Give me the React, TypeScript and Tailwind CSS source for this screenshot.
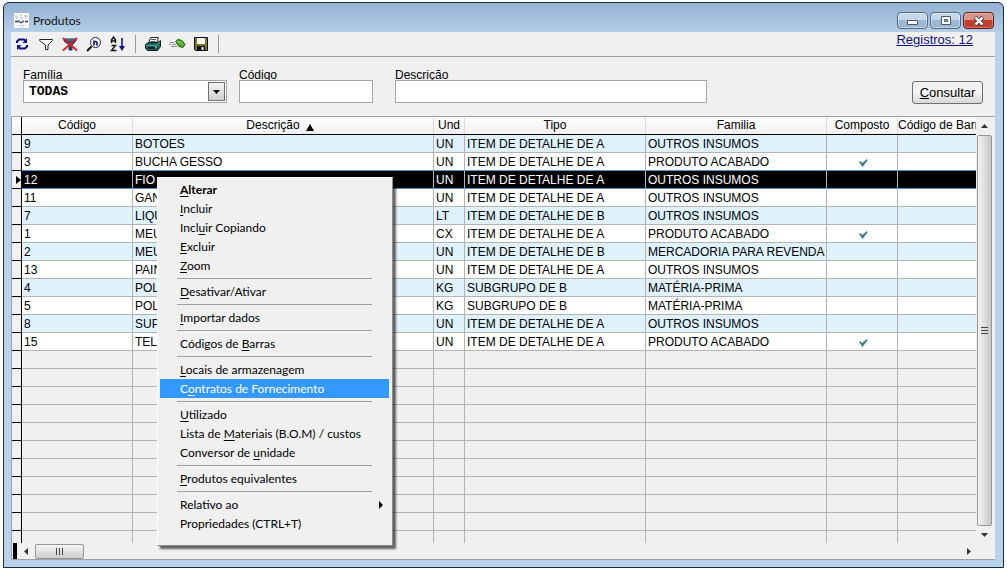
import React from 'react';

interface Product {
  code: string;
  name: string;
  unit: string;
  type: string;
  family: string;
  composite?: boolean;
}

const products: Product[] = [
  { code: '9', name: 'BOTOES', unit: 'UN', type: 'ITEM DE DETALHE DE A', family: 'OUTROS INSUMOS' },
  { code: '3', name: 'BUCHA GESSO', unit: 'UN', type: 'ITEM DE DETALHE DE A', family: 'PRODUTO ACABADO', composite: true },
  { code: '12', name: 'FIO', unit: 'UN', type: 'ITEM DE DETALHE DE A', family: 'OUTROS INSUMOS' },
  { code: '11', name: 'GAN', unit: 'UN', type: 'ITEM DE DETALHE DE A', family: 'OUTROS INSUMOS' },
  { code: '7', name: 'LIQU', unit: 'LT', type: 'ITEM DE DETALHE DE B', family: 'OUTROS INSUMOS' },
  { code: '1', name: 'MEU', unit: 'CX', type: 'ITEM DE DETALHE DE A', family: 'PRODUTO ACABADO', composite: true },
  { code: '2', name: 'MEU', unit: 'UN', type: 'ITEM DE DETALHE DE B', family: 'MERCADORIA PARA REVENDA' },
  { code: '13', name: 'PAIN', unit: 'UN', type: 'ITEM DE DETALHE DE A', family: 'OUTROS INSUMOS' },
  { code: '4', name: 'POL', unit: 'KG', type: 'SUBGRUPO DE B', family: 'MATÉRIA-PRIMA' },
  { code: '5', name: 'POL', unit: 'KG', type: 'SUBGRUPO DE B', family: 'MATÉRIA-PRIMA' },
  { code: '8', name: 'SUP', unit: 'UN', type: 'ITEM DE DETALHE DE A', family: 'OUTROS INSUMOS' },
  { code: '15', name: 'TEL', unit: 'UN', type: 'ITEM DE DETALHE DE A', family: 'PRODUTO ACABADO', composite: true },
];

const SELECTED = '12';
const EMPTY_ROWS = 10;

interface MenuEntry {
  // [before, mnemonic, after]
  text?: [string, string, string];
  bold?: boolean;
  active?: boolean;
  submenu?: boolean;
}

const menu: MenuEntry[] = [
  { text: ['', 'A', 'lterar'], bold: true },
  { text: ['', 'I', 'ncluir'] },
  { text: ['Incl', 'u', 'ir Copiando'] },
  { text: ['', 'E', 'xcluir'] },
  { text: ['', 'Z', 'oom'] },
  {},
  { text: ['', 'D', 'esativar/Ativar'] },
  {},
  { text: ['', 'I', 'mportar dados'] },
  {},
  { text: ['Códigos de ', 'B', 'arras'] },
  {},
  { text: ['', 'L', 'ocais de armazenagem'] },
  { text: ['C', 'o', 'ntratos de Fornecimento'], active: true },
  {},
  { text: ['', 'U', 'tilizado'] },
  { text: ['Lista de ', 'M', 'ateriais (B.O.M) / custos'] },
  { text: ['Conversor de ', 'u', 'nidade'] },
  {},
  { text: ['', 'P', 'rodutos equivalentes'] },
  {},
  { text: ['Relativo ao', '', ''], submenu: true },
  { text: ['Propriedades (CTRL+T)', '', ''] },
];

const ToolButton: React.FC<{ label: string; children: React.ReactNode }> = ({ label, children }) => (
  <button aria-label={label} className="flex h-6 w-[22px] items-center justify-center">
    <svg width="18" height="18" viewBox="0 0 18 18" fill="none">
      {children}
    </svg>
  </button>
);

const ToolSeparator = () => <div className="mx-1 h-[18px] w-px bg-[#999]" />;

const Toolbar = () => (
  <div className="flex h-[25px] items-start border-b border-[#a0a0a0] pr-[22px]">
    <div className="flex flex-1 items-center gap-0.5">
      <ToolButton label="Atualizar">
        <path d="M4 8V6.5L6 4.5h5l2 2" stroke="#10108c" strokeWidth="2" />
        <path d="M14 3v5H9.500z" fill="#10108c" />
        <path d="M14 10v1.500l-2 2H7l-2-2" stroke="#10108c" strokeWidth="2" />
        <path d="M4 15v-5h4.500z" fill="#10108c" />
      </ToolButton>
      <ToolButton label="Filtrar">
        <path d="M2.500 4.500h13v1L11 10v4.500H8.500V10L2.500 5.500z" fill="#fff" stroke="#222" />
      </ToolButton>
      <ToolButton label="Remover filtro">
        <path d="M3 4h12v2l-4 4v5H8v-5L3 6z" fill="#1b4f7c" stroke="#203060" />
        <path d="M5 5h8" stroke="#3aa0c0" />
        <path d="M2 3l14 12.500M16 3L2 15.500" stroke="#d8202c" strokeWidth="1.800" />
      </ToolButton>
      <ToolButton label="Localizar">
        <circle cx="10.500" cy="7.500" r="5" fill="#fff" stroke="#223" />
        <path d="M6.500 11.500L2 16" stroke="#111" strokeWidth="2" />
        <path d="M9 10.500V5.500M9 6.500h2l1 1v3" stroke="#10108c" strokeWidth="1.700" />
      </ToolButton>
      <ToolButton label="Ordenar">
        <path d="M2.500 8V5l2-3 2 3v3M2.500 6h4M2.500 10.500h4L2.500 15.500h5" stroke="#111" strokeWidth="1.400" />
        <path d="M13 3v11" stroke="#10108c" strokeWidth="1.600" />
        <path d="M10 11h6l-3 5z" fill="#10108c" />
      </ToolButton>
      <ToolSeparator />
      <ToolButton label="Imprimir">
        <path d="M6.500 2.500h8L12.500 8h-8z" fill="#fff" stroke="#222" />
        <path d="M7 4.500h5M6.500 6.500h5" stroke="#555" />
        <path d="M1.500 9.500l3-2h9l3-2v6l-3 4h-10l-2-2z" fill="#186060" stroke="#0b2020" />
        <path d="M2 10.500h11l3-3.500" stroke="#57a5a0" />
        <path d="M4 13h7" stroke="#061616" strokeWidth="1.500" />
        <path d="M11 12h2" stroke="#d8cf50" />
      </ToolButton>
      <ToolButton label="Enviar">
        <path d="M7.500 6.500L10 4.500l4 1 3 4-2 3-4-1z" fill="#4da82a" stroke="#1f5c10" />
        <path d="M9.500 6.500l4 1 1.500 2" stroke="#a8e070" />
        <path d="M2 7.500h4M1 9.500h2M4 9.500h4M3 11.500h6" stroke="#888" />
      </ToolButton>
      <ToolButton label="Salvar">
        <path d="M2.500 2.500h13v13h-12l-1-1z" fill="#77772a" stroke="#111" />
        <path d="M5 3h8v6H5z" fill="#f4f4f4" />
        <path d="M5 11h8v4H5z" fill="#111" />
        <path d="M10.500 12v3" stroke="#eee" strokeWidth="2" />
      </ToolButton>
      <ToolSeparator />
    </div>
    <a href="#registros" className="text-[13px] leading-4 text-[#10107c] underline">
      Registros: 12
    </a>
  </div>
);

const TitleBar = () => (
  <div className="flex h-[29px] items-start gap-1 pl-[3px] pr-px">
    <svg width="15" height="15" viewBox="0 0 15 15" className="mt-2.5">
      <path d="M0 0h15v15H0z" fill="#fff" />
      <path d="M1 3h3M6 2h2M10 3h4M2 5h2M6 5h3M11 5h2" stroke="#a9adb8" />
      <path d="M1 8.500h3M5 7.500v2M6 9.500h2M9 7.500v2M11 8.500h3" stroke="#26345e" strokeWidth="1.500" />
      <path d="M4 12.500h7M7 14.500h2" stroke="#c5c8d0" />
    </svg>
    <h1 className="mt-2.5 flex-1 font-[Lato,sans-serif] text-[12px] leading-4 text-[#111]">Produtos</h1>
    <div className="mt-[9px] flex gap-0.5">
      <button aria-label="Minimizar" className="flex h-[17px] w-[31px] items-center justify-center rounded-sm border border-[#50688a] bg-linear-to-b from-[#c5d7ea] from-50% to-[#9cb7d3] to-50% ring-1 ring-white/40 ring-inset">
        <svg width="12" height="6" viewBox="0 0 12 6" className="mt-1">
          <path d="M.5.5h10v4H.5z" fill="#fff" stroke="#4c5a6c" />
        </svg>
      </button>
      <button aria-label="Maximizar" className="flex h-[17px] w-[31px] items-center justify-center rounded-sm border border-[#50688a] bg-linear-to-b from-[#c5d7ea] from-50% to-[#9cb7d3] to-50% ring-1 ring-white/40 ring-inset">
        <svg width="12" height="10" viewBox="0 0 12 10">
          <path d="M1.500.5h9v8h-9z" fill="#fff" stroke="#4c5a6c" />
          <path d="M4.500 3.500h3v2h-3z" fill="#9cb7d3" stroke="#4c5a6c" />
        </svg>
      </button>
      <button aria-label="Fechar" className="flex h-[17px] w-[31px] items-center justify-center rounded-sm border border-[#5c1a18] bg-linear-to-b from-[#dc9284] from-50% to-[#c0402c] to-50% ring-1 ring-white/30 ring-inset">
        <svg width="12" height="10" viewBox="0 0 12 10">
          <path d="M2 1l8 8M10 1L2 9" stroke="#5a4a50" strokeWidth="4" />
          <path d="M2.500 1.500l7 7M9.500 1.500l-7 7" stroke="#fff" strokeWidth="2.400" />
        </svg>
      </button>
    </div>
  </div>
);

const Filters = () => (
  <form className="flex h-[59px] items-start pl-3 pr-3 pt-2.5">
    <div className="w-[204px]">
      <label htmlFor="familia" className="block h-[13px] text-[12px] leading-4">Família</label>
      <div className="relative">
        <select
          id="familia"
          className="block h-[23px] w-full appearance-none border border-[#a5a5a5] bg-white pl-[5px] font-['Liberation_Mono',monospace] text-[13px] font-bold leading-5 text-black"
        >
          <option>TODAS</option>
        </select>
        <span className="pointer-events-none absolute right-0.5 top-0.5 flex h-[19px] w-[17px] items-center justify-center border border-[#707070] bg-linear-to-b from-[#f4f4f4] to-[#d0d0d0]">
          <svg width="7" height="4" viewBox="0 0 7 4">
            <path d="M0 0h7L3.500 4z" fill="#000" />
          </svg>
        </span>
      </div>
    </div>
    <div className="ml-3 w-[134px]">
      <label htmlFor="codigo" className="block h-[13px] text-[12px] leading-4">Código</label>
      <input id="codigo" className="relative block h-[23px] w-full border border-[#a5a5a5] bg-white px-1" />
    </div>
    <div className="ml-[22px] w-[312px]">
      <label htmlFor="descricao" className="block h-[13px] text-[12px] leading-4">Descrição</label>
      <input id="descricao" className="relative block h-[23px] w-full border border-[#a5a5a5] bg-white px-1" />
    </div>
    <button
      type="button"
      className="ml-auto mt-3.5 h-[23px] w-[71px] rounded-[3px] border border-[#707070] bg-linear-to-b from-[#f3f3f3] from-50% to-[#d8d8d8] text-[13px] leading-5"
    >
      <span className="underline">C</span>onsultar
    </button>
  </form>
);

const Check = () => (
  <svg width="9" height="8" viewBox="0 0 9 8" className="mx-auto mt-0.5 block" aria-label="Sim">
    <path d="M0 3l1-1 2 2L8 0l.5 1.500L3.500 8z" fill="#3f7f80" />
  </svg>
);

const headCell = 'h-[18px] overflow-hidden border-b border-black p-0 text-center font-normal whitespace-nowrap';
const cell = 'h-[18px] overflow-hidden border-r border-b pt-px pr-0 pb-0 pl-0.5 leading-4 whitespace-nowrap';
const gutter = 'h-[18px] border-r border-b border-black bg-[#f0f0f0] p-0';

const ProductGrid = () => (
  <table className="w-full table-fixed border-separate border-spacing-0 text-[12px] leading-[17px] text-black">
    <colgroup>
      <col className="w-2.5" />
      <col className="w-[111px]" />
      <col className="w-[301px]" />
      <col className="w-[31px]" />
      <col className="w-[181px]" />
      <col className="w-[181px]" />
      <col className="w-[71px]" />
      <col />
    </colgroup>
    <thead>
      <tr className="bg-linear-to-b from-white to-[#f0f0f0]">
        <th className={`${headCell} border-r`} />
        <th className={headCell}><span className="block border-r border-[#dcdcdc]">Código</span></th>
        <th className={headCell}>
          <span className="flex items-center justify-center gap-1.5 border-r border-[#dcdcdc] pr-1.5">
            Descrição
            <svg width="8" height="7" viewBox="0 0 8 7" className="mt-1">
              <path d="M4 0l4 7H0z" fill="#000" />
            </svg>
          </span>
        </th>
        <th className={headCell}><span className="block border-r border-[#dcdcdc]">Und</span></th>
        <th className={headCell}><span className="block border-r border-[#dcdcdc]">Tipo</span></th>
        <th className={headCell}><span className="block border-r border-[#dcdcdc]">Familia</span></th>
        <th className={headCell}><span className="block border-r border-[#dcdcdc]">Composto</span></th>
        <th className={`${headCell} text-left`}>Código de Barras</th>
      </tr>
    </thead>
    <tbody>
      {products.map((p, i) => {
        const selected = p.code === SELECTED;
        const beforeSelected = products[i + 1]?.code === SELECTED;
        const line = selected || beforeSelected ? 'border-r-[#b4b4b4] border-b-[#4a90d9]' : 'border-[#b4b4b4]';
        const tone = selected ? 'bg-black text-white' : i % 2 === 0 ? 'bg-[#dff2fe]' : 'bg-white';
        return (
          <tr key={p.code} className={tone}>
            <td className={gutter}>
              {selected && (
                <svg width="5" height="8" viewBox="0 0 5 8" className="ml-auto block">
                  <path d="M0 0l5 4-5 4z" fill="#000" />
                </svg>
              )}
            </td>
            <td className={`${cell} ${line}`}>{p.code}</td>
            <td className={`${cell} ${line}`}>{p.name}</td>
            <td className={`${cell} ${line}`}>{p.unit}</td>
            <td className={`${cell} ${line}`}>{p.type}</td>
            <td className={`${cell} ${line}`}>{p.family}</td>
            <td className={`${cell} ${line}`}>{p.composite && <Check />}</td>
            <td className={`${cell} ${line} border-r-0`} />
          </tr>
        );
      })}
      {Array.from({ length: EMPTY_ROWS }, (_, i) => (
        <tr key={i}>
          <td className={gutter} />
          {[1, 2, 3, 4, 5, 6].map((c) => (
            <td key={c} className={`${cell} border-[#b4b4b4]`} />
          ))}
          <td className={`${cell} border-r-0 border-[#b4b4b4]`} />
        </tr>
      ))}
      <tr>
        <td className="h-3 border-r border-black p-0" />
        {[1, 2, 3, 4, 5, 6].map((c) => (
          <td key={c} className="h-3 border-r border-[#b4b4b4] p-0" />
        ))}
        <td className="h-3 p-0" />
      </tr>
    </tbody>
  </table>
);

const VerticalScroll = () => (
  <div className="flex w-4 flex-col items-center bg-[#f0f0f0] pl-px">
    <button aria-label="Rolar para cima" className="flex h-[18px] w-full items-center justify-center">
      <svg width="7" height="4" viewBox="0 0 7 4">
        <path d="M0 4h7L3.500 0z" fill="#333" />
      </svg>
    </button>
    <div className="flex w-[15px] flex-1 flex-col items-center justify-center gap-0.5 rounded-xs border border-[#979797] bg-linear-to-r from-[#f4f4f4] to-[#c6c6ca]">
      <span className="h-px w-[7px] bg-[#444]" />
      <span className="h-px w-[7px] bg-[#444]" />
      <span className="h-px w-[7px] bg-[#444]" />
    </div>
    <button aria-label="Rolar para baixo" className="flex h-[17px] w-full items-center justify-center">
      <svg width="7" height="4" viewBox="0 0 7 4">
        <path d="M0 0h7L3.500 4z" fill="#333" />
      </svg>
    </button>
  </div>
);

const HorizontalScroll = () => (
  <div className="flex h-4 items-center bg-[#f0f0f0] pl-px pr-[15px]">
    <span className="h-4 w-1 bg-black" />
    <button aria-label="Rolar para a esquerda" className="flex h-[15px] w-[18px] items-center justify-center">
      <svg width="4" height="7" viewBox="0 0 4 7">
        <path d="M4 0v7L0 3.500z" fill="#333" />
      </svg>
    </button>
    <div className="flex h-[15px] w-[49px] items-center justify-center gap-0.5 rounded-xs border border-[#979797] bg-linear-to-b from-[#f4f4f4] to-[#cdcdd0]">
      <span className="h-[7px] w-px bg-[#444]" />
      <span className="h-[7px] w-px bg-[#444]" />
      <span className="h-[7px] w-px bg-[#444]" />
    </div>
    <button aria-label="Rolar para a direita" className="ml-auto flex h-[15px] w-[17px] items-center justify-center">
      <svg width="4" height="7" viewBox="0 0 4 7">
        <path d="M0 0v7l4-3.500z" fill="#333" />
      </svg>
    </button>
  </div>
);

const ContextMenu = () => (
  <div
    role="menu"
    className="absolute left-[153px] top-[174px] w-[236px] border border-t-white border-l-white border-r-[#8c8c8c] border-b-[#8c8c8c] bg-[#f0f0f0] px-0.5 pb-3 pt-0.5 font-[Lato,sans-serif] text-[12px] text-black shadow-[3px_3px_2px_rgba(0,0,0,0.6)]"
  >
    {menu.map((item, i) =>
      item.text ? (
        <button
          key={i}
          role="menuitem"
          className={`flex h-[19px] w-[229px] items-center pl-5 pr-1.5 text-left leading-[19px] whitespace-pre ${
            item.bold ? 'font-bold' : ''
          } ${item.active ? 'bg-[#3399ff] text-white' : ''}`}
        >
          <span className="flex-1">
            {item.text[0]}
            <span className="underline underline-offset-2">{item.text[1]}</span>
            {item.text[2]}
          </span>
          {item.submenu && (
            <svg width="4" height="8" viewBox="0 0 4 8">
              <path d="M0 0l4 4-4 4z" fill="#000" />
            </svg>
          )}
        </button>
      ) : (
        <hr key={i} className="my-[3px] ml-[17px] mr-[18px] border-t border-[#a0a0a0]" />
      ),
    )}
  </div>
);

const App: React.FC = () => {
  return (
    <div className="min-h-screen bg-white px-[3px] pb-[3px] pt-0.5 font-['Liberation_Sans',Arial,sans-serif] text-black">
      <main className="relative rounded-t-md border border-[#1c2b36] bg-[#b9d1ea] bg-linear-to-b from-[#94b1d2] to-[#b9d1ea] to-[32px] pb-[7px] pl-[7px] pr-2">
        <TitleBar />
        <div className="bg-[#f0f0f0]">
          <Toolbar />
          <Filters />
          <div className="border-b border-l border-t border-[#a0a0a0] pr-[3px]">
            <div className="flex">
              <div className="min-w-0 flex-1">
                <ProductGrid />
              </div>
              <VerticalScroll />
            </div>
            <HorizontalScroll />
          </div>
        </div>
        <ContextMenu />
      </main>
    </div>
  );
};

export default App;
